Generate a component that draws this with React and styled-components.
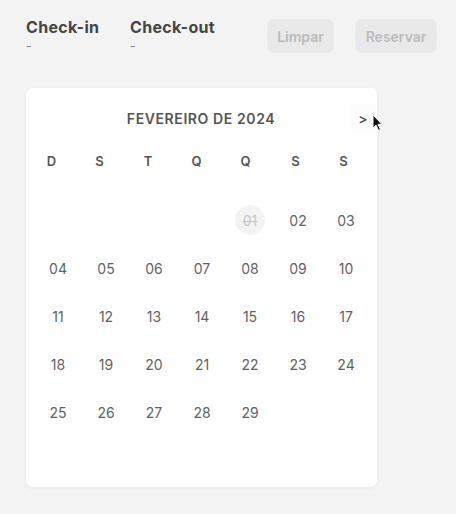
import React from "react";
import styled, { createGlobalStyle } from "styled-components";

const GlobalStyle = createGlobalStyle`
  html, body {
    margin: 0;
    padding: 0;
    background: #f3f3f3;
    font-family: "Inter", "Liberation Sans", sans-serif;
  }
`;

const Page = styled.div`
  width: 456px;
  height: 514px;
  box-sizing: border-box;
  padding: 17px 19px 0 26px;
  position: relative;
`;

const TopBar = styled.div`
  display: flex;
  align-items: flex-start;
`;

const DateField = styled.div`
  width: ${(p) => p.width}px;
  color: #444;
  h4 {
    margin: 0;
    font-size: 16px;
    font-weight: 700;
    line-height: 20px;
    letter-spacing: 0.3px;
  }
  span {
    display: block;
    margin-top: 2px;
    font-size: 12px;
    line-height: 14px;
    color: #777;
  }
`;

const Actions = styled.div`
  margin-left: auto;
  display: flex;
  gap: 21px;
  padding-top: 2px;
`;

const GhostButton = styled.button`
  height: 34px;
  width: ${(p) => p.width}px;
  border: none;
  border-radius: 7px;
  background: #e9e9e9;
  color: #bbbbbb;
  font-family: inherit;
  font-size: 14px;
  font-weight: 600;
  padding: 0;
`;

const Card = styled.div`
  margin-top: 35px;
  width: 351px;
  height: 399px;
  box-sizing: border-box;
  padding: 15px 0 3px;
  background: #fff;
  border-radius: 7px;
  box-shadow: 0 1px 4px rgba(0, 0, 0, 0.05);
`;

const MonthBar = styled.div`
  display: grid;
  grid-template-columns: 1fr auto 1fr;
  align-items: center;
  height: 30px;
  padding-right: 1px;
`;

const MonthTitle = styled.div`
  grid-column: 2;
  font-size: 14px;
  font-weight: 600;
  color: #555;
  letter-spacing: 0.6px;
`;

const NavButton = styled.button`
  justify-self: end;
  width: 26px;
  height: 28px;
  border: none;
  background: #fcfcfc;
  color: #444;
  font-family: inherit;
  font-size: 14px;
  font-weight: 500;
  padding: 0;
`;

const Grid = styled.div`
  display: grid;
  grid-template-columns: repeat(7, 48px);
  padding: 0 7px 0 8px;
`;

const WeekDay = styled.div`
  height: 30px;
  margin-top: 13px;
  margin-bottom: 20px;
  display: flex;
  align-items: center;
  justify-content: center;
  padding-right: ${(p) => p.shift}px;
  font-size: 13px;
  font-weight: 600;
  color: #555;
`;

const Day = styled.div`
  height: 48px;
  display: flex;
  align-items: center;
  justify-content: center;
  font-size: 14px;
  color: #626262;
  span {
    width: 30px;
    height: 30px;
    border-radius: 50%;
    display: flex;
    align-items: center;
    justify-content: center;
    background: ${(p) => (p.disabled ? "#f3f3f3" : "transparent")};
    color: ${(p) => (p.disabled ? "#c6c6c6" : "inherit")};
    text-decoration: ${(p) => (p.disabled ? "line-through" : "none")};
  }
`;

const Cursor = styled.svg`
  position: absolute;
  left: 372px;
  top: 114px;
`;

const weekDays = ["D", "S", "T", "Q", "Q", "S", "S"];
const shifts = [13, 13, 12, 11, 9, 5, 5];

function App() {
  const cells = [];
  for (let i = 0; i < 4; i++) cells.push(null);
  for (let d = 1; d <= 29; d++) cells.push(d);
  while (cells.length < 42) cells.push(null);

  return (
    <Page>
      <GlobalStyle />
      <TopBar>
        <DateField width={104}>
          <h4>Check-in</h4>
          <span>-</span>
        </DateField>
        <DateField width={110}>
          <h4>Check-out</h4>
          <span>-</span>
        </DateField>
        <Actions>
          <GhostButton width={67}>Limpar</GhostButton>
          <GhostButton width={82}>Reservar</GhostButton>
        </Actions>
      </TopBar>

      <Card>
        <MonthBar>
          <MonthTitle>FEVEREIRO DE 2024</MonthTitle>
          <NavButton>&gt;</NavButton>
        </MonthBar>
        <Grid>
          {weekDays.map((w, i) => (
            <WeekDay key={i} shift={shifts[i]}>{w}</WeekDay>
          ))}
          {cells.map((d, i) => (
            <Day key={i} disabled={d === 1}>
              {d && <span>{String(d).padStart(2, "0")}</span>}
            </Day>
          ))}
        </Grid>
      </Card>

      <Cursor width="12" height="18" viewBox="0 0 12 18">
        <path d="M1 1 L1 14 L4 11 L6.5 16.5 L8.5 15.6 L6 10.3 L10 10.3 Z" fill="#111" stroke="#fff" strokeWidth="1" />
      </Cursor>
    </Page>
  );
}

export default App;
